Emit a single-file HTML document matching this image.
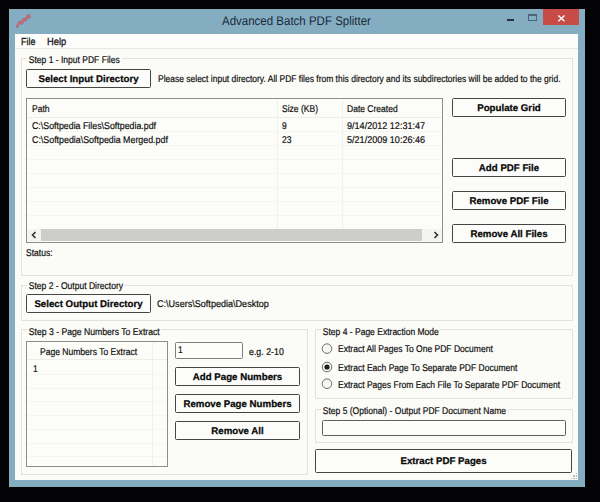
<!DOCTYPE html>
<html><head><meta charset="utf-8">
<style>
html,body{margin:0;padding:0;width:600px;height:502px;overflow:hidden;background:#030306;}
*{box-sizing:border-box;}
div,span{position:absolute;}
body{font-family:"Liberation Sans",sans-serif;}
.t{font-size:9.8px;line-height:9.8px;color:#101010;-webkit-text-stroke:0.2px #101010;white-space:nowrap;transform-origin:0 0;}
body{text-rendering:geometricPrecision;}
.m{font-size:10.2px;line-height:10.2px;color:#1a1a22;-webkit-text-stroke:0.3px #1a1a22;white-space:nowrap;}
.btn{border:1px solid #454545;border-radius:1.5px;background:#FCFCFA;}
.bt{font-weight:bold;font-size:9.7px;line-height:9.7px;color:#080808;-webkit-text-stroke:0.25px #080808;text-align:center;white-space:nowrap;}
.grp{border:1px solid #E2E2DE;}
.lbl{background:#FBFBF7;padding:0 2px;}
.tb{border:1px solid #7E7E7E;border-radius:1.5px;background:#FDFDFB;}
.rad{width:11px;height:11px;border:1px solid #666;border-radius:50%;background:#F8F8F8;}
</style></head><body>
<div style="left:9px;top:9px;width:576px;height:478px;background:#84ADC1;"></div>
<svg style="position:absolute;left:0;top:0" width="40" height="32" viewBox="0 0 40 32">
<path d="M17 26.8 L19.2 22.6 Q20.3 21 21 22.6 Q21.6 24.6 22.4 22.6 L23.3 19.6 Q24.2 17.6 24.8 19.6 Q25.3 21.4 26.2 19.4 L27.2 16.6 Q28 14.8 29 15.6 Q29.8 16.6 29.6 17.6" fill="none" stroke="#6a5a66" stroke-width="2.4" stroke-linejoin="round" stroke-linecap="round" opacity="0.5"/>
<path d="M17 26.8 L19.2 22.6 Q20.3 21 21 22.6 Q21.6 24.6 22.4 22.6 L23.3 19.6 Q24.2 17.6 24.8 19.6 Q25.3 21.4 26.2 19.4 L27.2 16.6 Q28 14.8 29 15.6 Q29.8 16.6 29.6 17.6" fill="none" stroke="#D86070" stroke-width="1.5" stroke-linejoin="round" stroke-linecap="round"/>
</svg>
<div style="left:222px;top:14.2px;font-size:12.5px;line-height:14px;color:#1A2A3A;white-space:nowrap;transform:scaleX(0.92);transform-origin:0 0;">Advanced Batch PDF Splitter</div>
<div style="left:507px;top:19px;width:7px;height:2px;background:#22344A;"></div>
<div style="left:528px;top:14px;width:9px;height:7px;border:1px solid #4A6676;border-top-width:2px;"></div>
<div style="left:543px;top:9px;width:36px;height:16px;background:#C74C47;"></div>
<svg style="position:absolute;left:557px;top:14px" width="9" height="9" viewBox="0 0 9 9">
<path d="M1.3 1.5 L7.5 7.3 M7.5 1.5 L1.3 7.3" stroke="#fff" stroke-width="1.4"/>
</svg>
<div style="left:15px;top:34px;width:563px;height:446px;background:#FBFBF7;"></div>
<div style="left:15px;top:34px;width:563px;height:15px;background:#FDFDFB;border-bottom:1px solid #E8E8E4;"></div>
<div class="m" style="left:21px;top:38.4px;transform:scaleX(0.88);transform-origin:0 0;">File</div>
<div class="m" style="left:47px;top:38.4px;transform:scaleX(0.92);transform-origin:0 0;">Help</div>
<div class="grp" style="left:21px;top:58px;width:552px;height:218px;"></div>
<div class="t lbl" style="left:27px;top:56.00px;transform:scaleX(0.87);">Step 1 - Input PDF Files</div>
<div class="btn" style="left:26px;top:69px;width:125px;height:19px;"></div>
<div class="bt" style="left:26px;top:75px;width:125px;">Select Input Directory</div>
<div class="t" style="left:158px;top:75.00px;transform:scaleX(0.866);">Please select input directory. All PDF files from this directory and its subdirectories will be added to the grid.</div>
<div style="left:26px;top:98px;width:417px;height:145px;border:1px solid #8E8E8A;background:#FCFCF9;"></div>
<div style="left:27px;top:117px;width:415px;height:1px;background:#EDEDE9;"></div>
<div style="left:277px;top:99px;width:1px;height:130px;background:#F0F0EC;"></div>
<div style="left:342px;top:99px;width:1px;height:130px;background:#F0F0EC;"></div>
<div style="left:27px;top:131px;width:415px;height:1px;background:#F5F5F1;"></div>
<div style="left:27px;top:145px;width:415px;height:1px;background:#F5F5F1;"></div>
<div style="left:27px;top:159px;width:415px;height:1px;background:#F5F5F1;"></div>
<div style="left:27px;top:173px;width:415px;height:1px;background:#F5F5F1;"></div>
<div style="left:27px;top:187px;width:415px;height:1px;background:#F5F5F1;"></div>
<div style="left:27px;top:201px;width:415px;height:1px;background:#F5F5F1;"></div>
<div style="left:27px;top:215px;width:415px;height:1px;background:#F5F5F1;"></div>
<div class="t" style="left:32px;top:105.00px;transform:scaleX(0.87);">Path</div>
<div class="t" style="left:282px;top:105.00px;transform:scaleX(0.87);">Size (KB)</div>
<div class="t" style="left:347px;top:105.00px;transform:scaleX(0.87);">Date Created</div>
<div class="t" style="left:32px;top:122.00px;transform:scaleX(0.9);">C:\Softpedia Files\Softpedia.pdf</div>
<div class="t" style="left:282px;top:122.00px;transform:scaleX(0.87);">9</div>
<div class="t" style="left:347px;top:122.00px;transform:scaleX(0.925);">9/14/2012 12:31:47</div>
<div class="t" style="left:32px;top:136.00px;transform:scaleX(0.904);">C:\Softpedia\Softpedia Merged.pdf</div>
<div class="t" style="left:282px;top:136.00px;transform:scaleX(0.87);">23</div>
<div class="t" style="left:347px;top:136.00px;transform:scaleX(0.925);">5/21/2009 10:26:46</div>
<div style="left:27px;top:229px;width:415px;height:12px;background:#F3F3F0;"></div>
<div style="left:41px;top:229px;width:381px;height:12px;background:#CDCEC9;"></div>
<svg style="position:absolute;left:30px;top:231px" width="8" height="8" viewBox="0 0 8 8"><path d="M5.5 1 L2.5 4 L5.5 7" fill="none" stroke="#333" stroke-width="1.6"/></svg>
<svg style="position:absolute;left:432px;top:231px" width="8" height="8" viewBox="0 0 8 8"><path d="M2.5 1 L5.5 4 L2.5 7" fill="none" stroke="#333" stroke-width="1.6"/></svg>
<div class="t" style="left:26px;top:249.00px;transform:scaleX(0.87);">Status:</div>
<div class="btn" style="left:452px;top:98px;width:114px;height:19px;"></div>
<div class="bt" style="left:452px;top:104px;width:114px;">Populate Grid</div>
<div class="btn" style="left:452px;top:158px;width:114px;height:19px;"></div>
<div class="bt" style="left:452px;top:164px;width:114px;">Add PDF File</div>
<div class="btn" style="left:452px;top:191px;width:114px;height:19px;"></div>
<div class="bt" style="left:452px;top:197px;width:114px;">Remove PDF File</div>
<div class="btn" style="left:452px;top:224px;width:114px;height:19px;"></div>
<div class="bt" style="left:452px;top:230px;width:114px;">Remove All Files</div>
<div class="grp" style="left:21px;top:285px;width:552px;height:36px;"></div>
<div class="t lbl" style="left:27px;top:282.00px;transform:scaleX(0.87);">Step 2 - Output Directory</div>
<div class="btn" style="left:26px;top:294px;width:125px;height:19px;"></div>
<div class="bt" style="left:26px;top:300px;width:125px;">Select Output Directory</div>
<div class="t" style="left:157px;top:300.00px;transform:scaleX(0.925);">C:\Users\Softpedia\Desktop</div>
<div class="grp" style="left:21px;top:329px;width:287px;height:146px;"></div>
<div class="t lbl" style="left:27px;top:328.00px;transform:scaleX(0.882);">Step 3 - Page Numbers To Extract</div>
<div style="left:26px;top:341px;width:142px;height:126px;border:1px solid #8E8E8A;background:#FCFCF9;"></div>
<div style="left:27px;top:359px;width:140px;height:1px;background:#EDEDE9;"></div>
<div style="left:152px;top:342px;width:1px;height:124px;background:#F0F0EC;"></div>
<div style="left:27px;top:374px;width:140px;height:1px;background:#F5F5F1;"></div>
<div style="left:27px;top:388px;width:140px;height:1px;background:#F5F5F1;"></div>
<div style="left:27px;top:401px;width:140px;height:1px;background:#F5F5F1;"></div>
<div style="left:27px;top:415px;width:140px;height:1px;background:#F5F5F1;"></div>
<div style="left:27px;top:429px;width:140px;height:1px;background:#F5F5F1;"></div>
<div style="left:27px;top:443px;width:140px;height:1px;background:#F5F5F1;"></div>
<div style="left:27px;top:456px;width:140px;height:1px;background:#F5F5F1;"></div>
<div class="t" style="left:39.5px;top:348.00px;transform:scaleX(0.872);">Page Numbers To Extract</div>
<div class="t" style="left:32.5px;top:365.00px;transform:scaleX(0.87);">1</div>
<div class="tb" style="left:175px;top:342px;width:68px;height:17px;"></div>
<div class="t" style="left:177.5px;top:346.00px;transform:scaleX(0.87);">1</div>
<div class="t" style="left:248.8px;top:348.00px;transform:scaleX(0.9);">e.g. 2-10</div>
<div class="btn" style="left:175px;top:367px;width:125px;height:19px;"></div>
<div class="bt" style="left:175px;top:373px;width:125px;">Add Page Numbers</div>
<div class="btn" style="left:175px;top:394px;width:125px;height:19px;"></div>
<div class="bt" style="left:175px;top:400px;width:125px;">Remove Page Numbers</div>
<div class="btn" style="left:175px;top:421px;width:125px;height:19px;"></div>
<div class="bt" style="left:175px;top:427px;width:125px;">Remove All</div>
<div class="grp" style="left:315px;top:329px;width:258px;height:70px;"></div>
<div class="t lbl" style="left:320.5px;top:328.00px;transform:scaleX(0.87);">Step 4 - Page Extraction Mode</div>
<svg style="position:absolute;left:315px;top:340px" width="24" height="52" viewBox="315 340 24 52"><circle cx="327" cy="348.6" r="4.8" fill="#F6F6F4" stroke="#6E6E6E" stroke-width="1"/><circle cx="327" cy="367" r="4.8" fill="#F6F6F4" stroke="#6E6E6E" stroke-width="1"/><circle cx="327" cy="367" r="2.6" fill="#1E1E1E"/><circle cx="327" cy="383.7" r="4.8" fill="#F6F6F4" stroke="#6E6E6E" stroke-width="1"/></svg>
<div class="t" style="left:337.5px;top:345.00px;transform:scaleX(0.87);">Extract All Pages To One PDF Document</div>
<div class="t" style="left:337.5px;top:364.00px;transform:scaleX(0.87);">Extract Each Page To Separate PDF Document</div>
<div class="t" style="left:337.5px;top:381.00px;transform:scaleX(0.87);">Extract Pages From Each File To Separate PDF Document</div>
<div class="grp" style="left:315px;top:409px;width:258px;height:34px;"></div>
<div class="t lbl" style="left:320.5px;top:407.00px;transform:scaleX(0.87);">Step 5 (Optional) - Output PDF Document Name</div>
<div class="tb" style="left:322px;top:420px;width:244px;height:16px;border-color:#5E5E5E;box-shadow:inset 1px 1px 0 #fff;"></div>
<div class="btn" style="left:315px;top:449px;width:257px;height:24px;"></div>
<div class="bt" style="left:315px;top:457px;width:257px;">Extract PDF Pages</div>
<div style="left:575.5px;top:472.5px;width:1.6px;height:1.6px;background:#BBBBBB;"></div>
<div style="left:573px;top:475px;width:1.6px;height:1.6px;background:#BBBBBB;"></div>
<div style="left:575.5px;top:475px;width:1.6px;height:1.6px;background:#BBBBBB;"></div>
<div style="left:570.5px;top:477.5px;width:1.6px;height:1.6px;background:#BBBBBB;"></div>
<div style="left:573px;top:477.5px;width:1.6px;height:1.6px;background:#BBBBBB;"></div>
<div style="left:575.5px;top:477.5px;width:1.6px;height:1.6px;background:#BBBBBB;"></div>
</body></html>
